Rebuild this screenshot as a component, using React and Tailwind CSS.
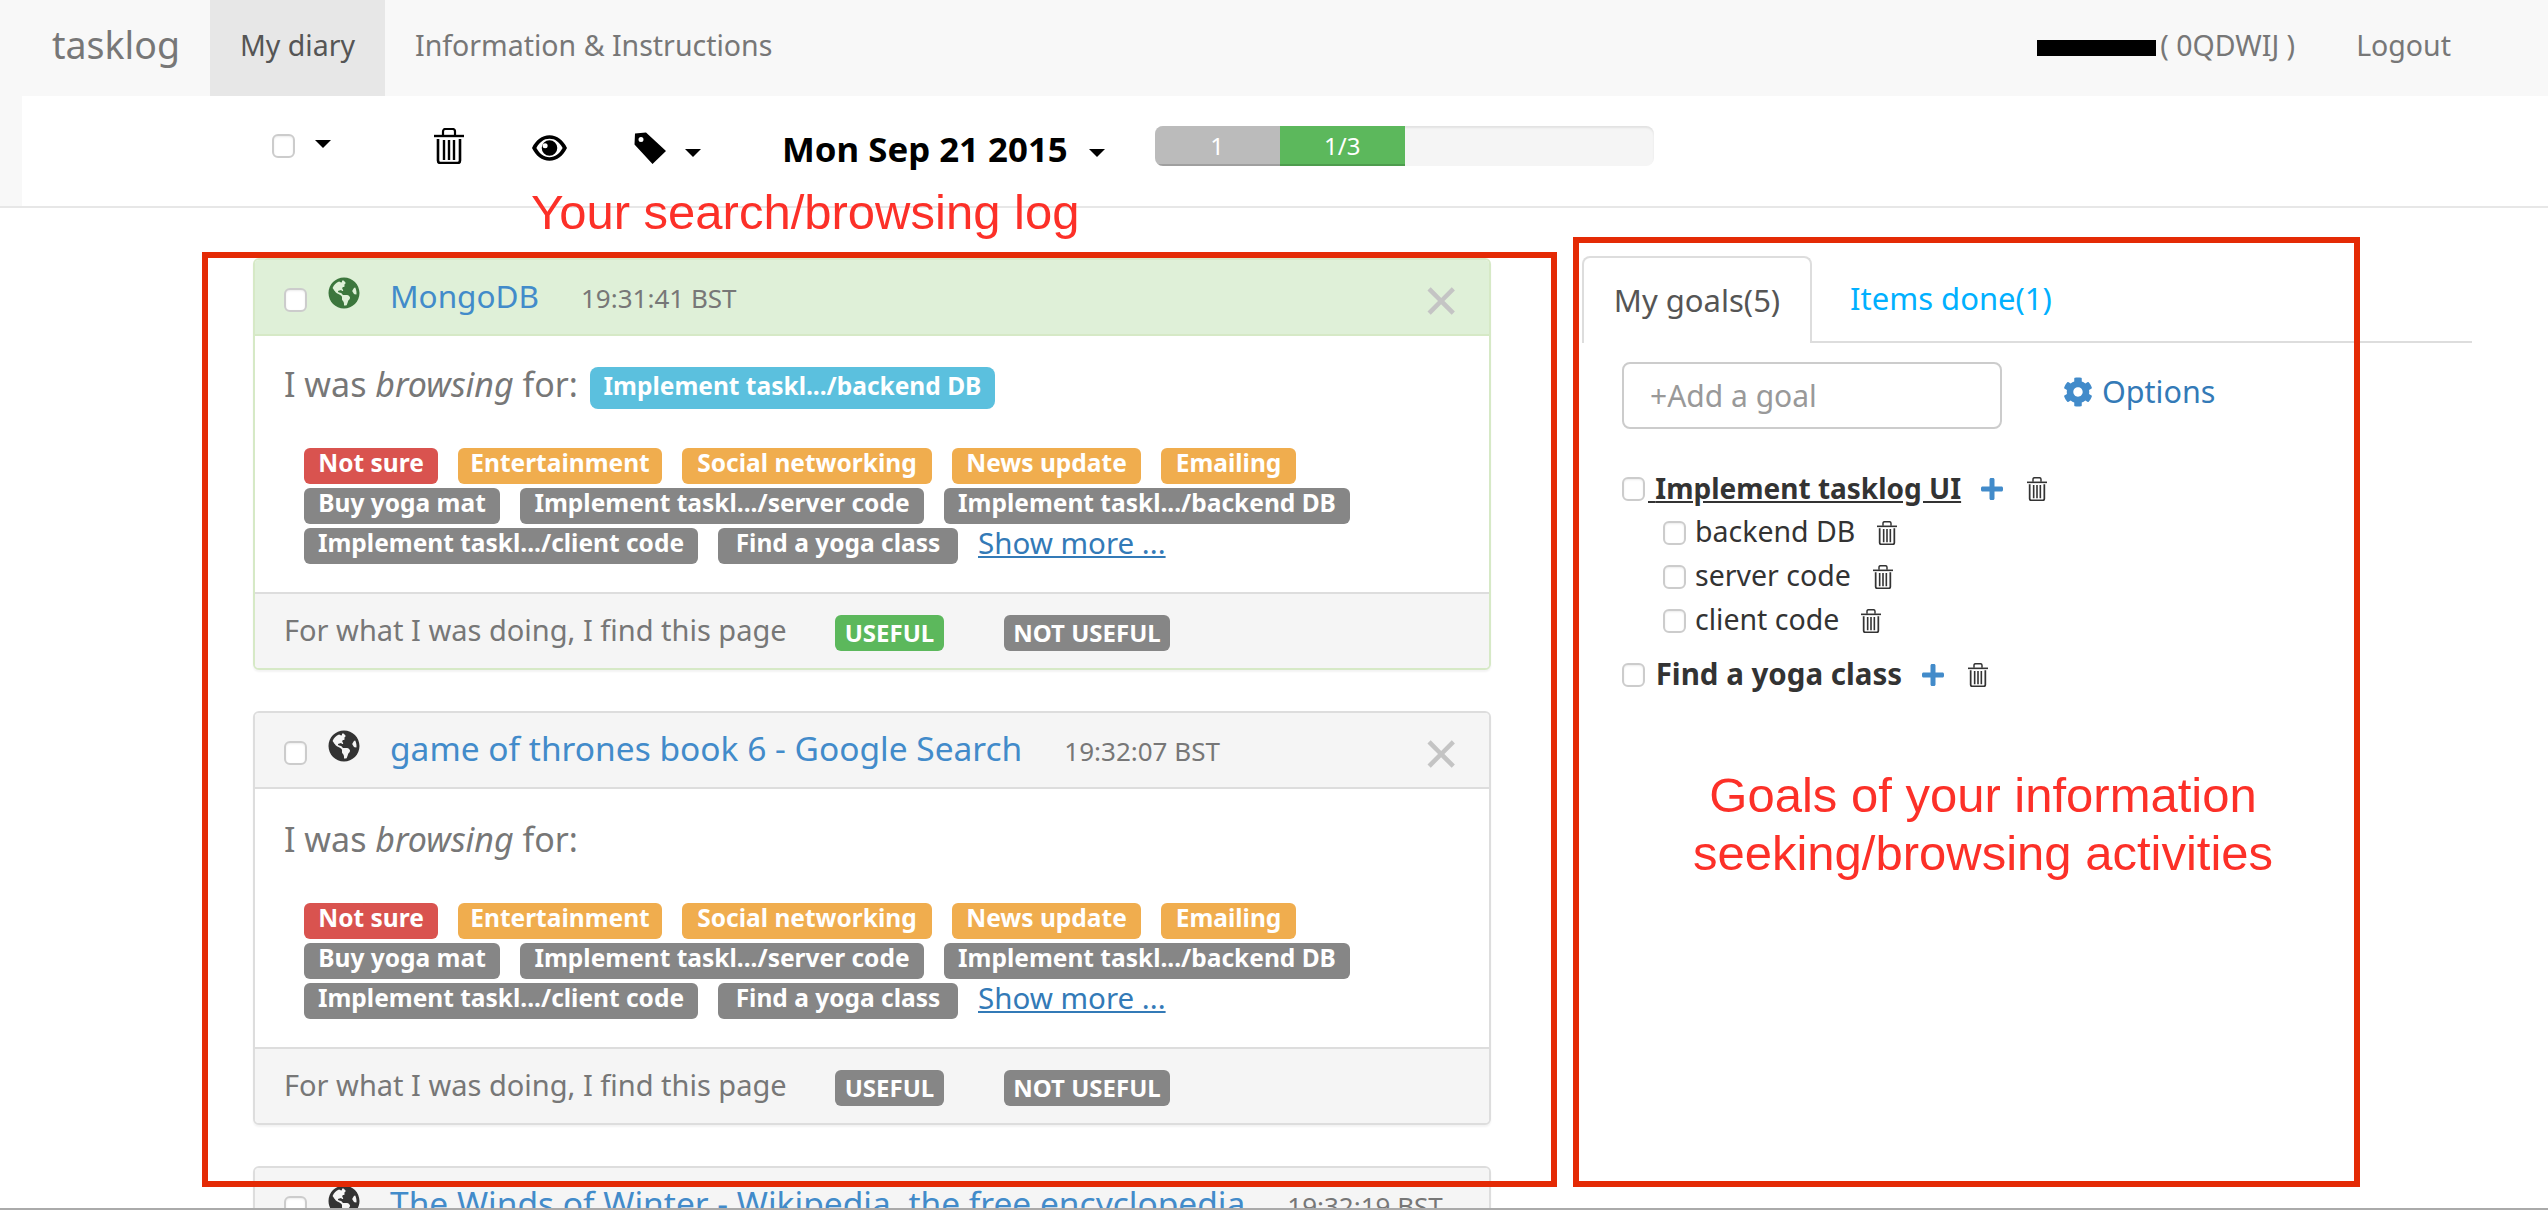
import { FaCog, FaGlobeAmericas } from "react-icons/fa";

const row1 = [
  { text: "Not sure", cls: "w-[134px] bg-[#d9534f]" },
  { text: "Entertainment", cls: "w-[204px] bg-[#f0ad4e]" },
  { text: "Social networking", cls: "w-[250px] bg-[#f0ad4e]" },
  { text: "News update", cls: "w-[189px] bg-[#f0ad4e]" },
  { text: "Emailing", cls: "w-[135px] bg-[#f0ad4e]" },
];
const row2 = [
  { text: "Buy yoga mat", cls: "w-[196px] bg-[#868686]" },
  { text: "Implement taskl.../server code", cls: "w-[404px] bg-[#868686]" },
  { text: "Implement taskl.../backend DB", cls: "w-[406px] bg-[#868686]" },
];
const row3 = [
  { text: "Implement taskl.../client code", cls: "w-[394px] bg-[#868686]" },
  { text: "Find a yoga class", cls: "w-[240px] bg-[#868686]" },
];

function Check({ className = "" }) {
  return (
    <span className={`block h-[24px] w-[23px] shrink-0 rounded-[6px] border-2 border-[#cccccc] bg-white shadow-[inset_0_1px_2px_rgba(0,0,0,0.08)] ${className}`} />
  );
}

function Caret({ className = "" }) {
  return <span className={`block h-0 w-0 border-x-[8px] border-t-[8px] border-x-transparent border-t-black ${className}`} />;
}

function TrashIcon({ className = "", color = "#000" }) {
  return (
    <svg viewBox="0 0 30 36" className={className} fill="none" stroke={color}>
      <path d="M0 8h30" strokeWidth="2.4" />
      <path d="M9 7V3.500C9 2 10 1 11.500 1h7C20 1 21 2 21 3.500V7" strokeWidth="2.2" />
      <path d="M4 11v21.500c0 1.500 1 2.500 2.500 2.500h17c1.500 0 2.500-1 2.500-2.500V11" strokeWidth="2.6" />
      <path d="M10 12v20M15 12v20M20 12v20" strokeWidth="2.4" />
    </svg>
  );
}

function EyeIcon() {
  return (
    <svg viewBox="0 0 36 26" className="block h-[26px] w-[35px]">
      <path fillRule="evenodd" d="M0 13C4 5 10 0 18 0s14 5 18 13c-4 8-10 13-18 13S4 21 0 13zM4.500 13C8 7 12 3.600 18 3.600S28 7 31.500 13C28 19 24 22.400 18 22.400S8 19 4.500 13z" />
      <path fillRule="evenodd" d="M18 5a8 8 0 1 1 0 16 8 8 0 0 1 0-16zM13.500 8a2.600 2.600 0 1 0 0 5.200 2.600 2.600 0 0 0 0-5.200z" />
    </svg>
  );
}

function TagIcon() {
  return (
    <svg viewBox="0 0 32 32" className="block h-[32px] w-[32px]">
      <path fillRule="evenodd" d="M1 1.500 12 0.500 32 19 18.500 32 0.500 12.500zM7 5a2.500 2.500 0 1 0 0 5 2.500 2.500 0 0 0 0-5z" />
    </svg>
  );
}

function PlusIcon() {
  return (
    <svg viewBox="0 0 22 22" className="block h-[22px] w-[22px] shrink-0" fill="#428bca">
      <path d="M8.500 1.500c0-.8.7-1.500 1.500-1.500h2c.8 0 1.500.7 1.500 1.500v7h7c.8 0 1.500.7 1.500 1.500v2c0 .8-.7 1.500-1.500 1.500h-7v7c0 .8-.7 1.500-1.500 1.500h-2c-.8 0-1.500-.7-1.500-1.500v-7h-7C.7 13.500 0 12.800 0 12v-2c0-.8.7-1.500 1.500-1.500h7z" />
    </svg>
  );
}

function Tag({ text, cls }) {
  return (
    <span className={`flex h-[36px] items-center justify-center rounded-[6px] pb-[5px] text-[24.5px] leading-none font-bold whitespace-nowrap text-white ${cls}`}>
      {text}
    </span>
  );
}

function LogCard({ title, titleSize = "text-[33.5px]", time, color = "text-[#333333]", variant, chosen, useful, closable = true }) {
  const green = variant === "green";
  return (
    <div className={`rounded-[6px] border-2 bg-white shadow-[0_2px_2px_rgba(0,0,0,0.05)] ${green ? "border-[#d6e9c6]" : "border-[#dddddd]"}`}>
      <div className={`relative flex h-[76px] items-center rounded-t-[4px] border-b-2 pl-[29px] ${green ? "border-[#d6e9c6] bg-[#dff0d8]" : "border-[#dddddd] bg-[#f5f5f5]"}`}>
        <Check className="mt-[6px]" />
        <FaGlobeAmericas className={`mt-[-8px] ml-[21px] h-[32px] w-[32px] shrink-0 ${color}`} />
        <span className={`ml-[30px] mb-[3px] leading-none whitespace-nowrap text-[#428bca] ${titleSize}`}>{title}</span>
        <span className="ml-[42px] mt-[2px] text-[26px] leading-none whitespace-nowrap text-[#777777]">{time}</span>
        {closable && <span className="ml-auto mr-[30px] mt-[3px] text-[62px] leading-none text-[#c4c4c4]">×</span>}
      </div>
      <div className={`pl-[29px] ${chosen ? "h-[256px] pt-[31px]" : "h-[258px] pt-[33px]"}`}>
        <div className="flex h-[42px] items-center text-[34px] leading-none text-[#777777]">
          <span className="mb-[9px] whitespace-pre">I was <em>browsing</em> for:</span>
          {chosen && (
            <span className="ml-[12px] flex h-[42px] w-[405px] items-center justify-center rounded-[8px] bg-[#5bc0de] pb-[3px] text-[24.5px] font-bold whitespace-nowrap text-white">
              {chosen}
            </span>
          )}
        </div>
        <div className="mt-[39px] ml-[20px] flex flex-col gap-[4px]">
          <div className="flex gap-[20px]">
            {row1.map((t) => (
              <Tag key={t.text} {...t} />
            ))}
          </div>
          <div className="flex gap-[20px]">
            {row2.map((t) => (
              <Tag key={t.text} {...t} />
            ))}
          </div>
          <div className="flex items-center gap-[20px]">
            {row3.map((t) => (
              <Tag key={t.text} {...t} />
            ))}
            <a className="mb-[6px] text-[29.5px] leading-none text-[#337ab7] underline">Show more ...</a>
          </div>
        </div>
      </div>
      <div className="flex h-[76px] items-center rounded-b-[4px] border-t-2 border-[#dddddd] bg-[#f5f5f5] pl-[29px]">
        <span className="mb-[3px] w-[503px] text-[29px] leading-none whitespace-nowrap text-[#777777]">For what I was doing, I find this page</span>
        <span className={`mt-[3px] ml-[48px] flex h-[36px] w-[109px] items-center justify-center rounded-[6px] text-[24px] font-bold text-white ${useful ? "bg-[#5cb85c]" : "bg-[#868686]"}`}>USEFUL</span>
        <span className="mt-[3px] ml-[60px] flex h-[36px] w-[166px] items-center justify-center rounded-[6px] bg-[#868686] text-[24px] font-bold text-white">NOT USEFUL</span>
      </div>
    </div>
  );
}

function GoalRow({ label, size = "text-[28.5px]", bold, underline, indent, add, className = "" }) {
  return (
    <div className={`flex h-[24px] items-center ${indent ? "ml-[41px]" : ""} ${className}`}>
      <Check />
      <span className={`mb-[3px] whitespace-pre leading-none text-[#333333] ${size} ${bold ? "font-bold" : ""} ${underline ? "underline" : ""} ${indent ? "ml-[9px]" : "ml-[3px]"}`}>
        {indent ? "" : " "}{label}
      </span>
      {add && <span className="ml-[20px]"><PlusIcon /></span>}
      <TrashIcon color="#333" className={`h-[24px] w-[20px] shrink-0 ${add ? "ml-[24px]" : "ml-[22px]"}`} />
    </div>
  );
}

export default function App() {
  return (
    <div className="relative h-[1210px] w-[2548px] overflow-hidden bg-white font-['Noto_Sans',sans-serif]">
      <nav className="flex h-[96px] items-center bg-[#f8f8f8] text-[28.5px] leading-none text-[#777777]">
        <span className="mb-[6px] w-[210px] pl-[52px] text-[37.5px] leading-none">tasklog</span>
        <span className="flex h-full w-[175px] items-center bg-[#e7e7e7] pb-[6px] pl-[30px] text-[#555555]">My diary</span>
        <span className="mb-[6px] pl-[30px]">Information &amp; Instructions</span>
        <div className="ml-auto flex items-center pr-[97px]">
          <span className="h-[16px] w-[119px] bg-black" />
          <span className="ml-[4px] mb-[6px] whitespace-nowrap">( 0QDWIJ )</span>
          <span className="ml-[61px] mb-[6px]">Logout</span>
        </div>
      </nav>

      <div className="flex h-[112px] border-b-2 border-[#e7e7e7] bg-[#f8f8f8]">
        <div className="ml-[22px] flex flex-1 items-center bg-white pb-[10px] pl-[250px]">
          <Check />
          <Caret className="ml-[20px] mb-[4px]" />
          <TrashIcon className="ml-[103px] h-[36px] w-[30px]" />
          <span className="ml-[68px] mt-[4px]"><EyeIcon /></span>
          <span className="ml-[67px] mt-[4px]"><TagIcon /></span>
          <Caret className="ml-[19px] mt-[14px]" />
          <span className="ml-[81px] mt-[6px] text-[34.8px] leading-none font-bold whitespace-nowrap text-black">Mon Sep 21 2015</span>
          <Caret className="ml-[21px] mt-[14px]" />
          <div className="ml-[50px] flex h-[40px] w-[499px] overflow-hidden rounded-[8px] bg-[#f5f5f5] text-[24px] text-white shadow-[inset_0_2px_2px_rgba(0,0,0,0.08)]">
            <span className="flex w-[125px] items-center justify-center bg-[#bbbbbb] shadow-[inset_0_-2px_0_rgba(0,0,0,0.15)]">1</span>
            <span className="flex w-[125px] items-center justify-center bg-[#5cb85c] shadow-[inset_0_-2px_0_rgba(0,0,0,0.15)]">1/3</span>
          </div>
        </div>
      </div>

      <div className="flex">
        <div className="ml-[253px] flex w-[1238px] shrink-0 flex-col gap-[41px] pt-[50px]">
          <LogCard
            title="MongoDB"
            titleSize="text-[31.5px]"
            time="19:31:41 BST"
            variant="green"
            color="text-[#3c763d]"
            chosen="Implement taskl.../backend DB"
            useful
          />
          <LogCard title="game of thrones book 6 - Google Search" time="19:32:07 BST" />
          <LogCard title="The Winds of Winter - Wikipedia, the free encyclopedia" time="19:32:19 BST" closable={false} />
        </div>

        <div className="ml-[91px] w-[890px] pt-[48px]">
          <div className="flex h-[87px] border-b-2 border-[#dddddd] text-[31px]">
            <span className="mb-[-2px] flex w-[230px] items-center justify-center rounded-t-[8px] border-2 border-b-0 border-[#dddddd] bg-white text-[#555555]">My goals(5)</span>
            <span className="ml-[38px] flex items-center text-[#00b0ff]">Items done(1)</span>
          </div>
          <div className="mt-[19px] ml-[40px] flex items-start">
            <div className="flex h-[67px] w-[380px] items-center rounded-[8px] border-2 border-[#cccccc] pl-[26px] text-[30px] text-[#999999]">+Add a goal</div>
            <div className="mt-[7px] ml-[61px] flex items-center text-[30.5px] text-[#337ab7]">
              <FaCog className="h-[30px] w-[30px] text-[#428bca]" />
              <span className="ml-[9px]">Options</span>
            </div>
          </div>
          <div className="mt-[48px] ml-[40px] flex flex-col">
            <GoalRow label="Implement tasklog UI" size="text-[28px]" bold underline add />
            <GoalRow label="backend DB" indent className="mt-[20px]" />
            <GoalRow label="server code" indent className="mt-[20px]" />
            <GoalRow label="client code" indent className="mt-[20px]" />
            <GoalRow label="Find a yoga class" size="text-[29.5px]" bold add className="mt-[30px]" />
          </div>
        </div>
      </div>

      {/* annotations drawn on top of the screenshot */}
      <div className="absolute top-[252px] left-[202px] h-[935px] w-[1355px] border-[6px] border-[#e42a05]" />
      <div className="absolute top-[237px] left-[1573px] h-[950px] w-[787px] border-[6px] border-[#e42a05]" />
      <div className="absolute top-[183px] left-[531px] font-['Liberation_Sans',sans-serif] text-[49px] leading-[58px] whitespace-nowrap text-[#fc3028]">
        Your search/browsing log
      </div>
      <div className="absolute top-[766px] left-[1683px] w-[600px] text-center font-['Liberation_Sans',sans-serif] text-[49px] leading-[58px] text-[#fc3028]">
        Goals of your information seeking/browsing activities
      </div>
      <div className="absolute bottom-0 left-0 h-[2px] w-full bg-[#aaaaaa]" />
    </div>
  );
}
